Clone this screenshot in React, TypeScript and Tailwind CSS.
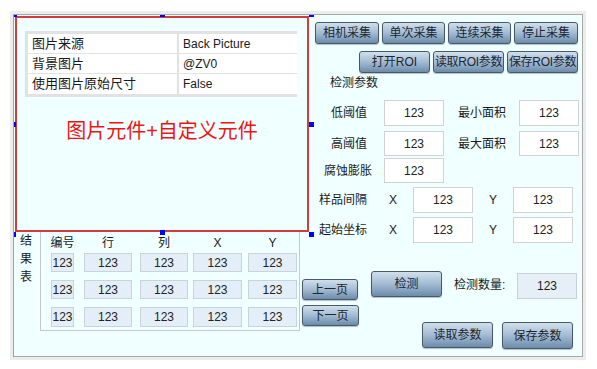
import React, {ReactNode} from "react"

// 按钮：蓝灰渐变
function Btn({children, className}: {children: ReactNode; className: string}) {
    return (
        <div
            className={`flex items-center justify-center whitespace-nowrap rounded-[3px] border border-[#4a5868] bg-linear-to-b from-[#d0dfec] via-[#a3bbd2] to-[#6c8cac] text-[12px] text-[#1c2630] shadow-[0_1px_1px_rgba(0,0,0,0.25)] ${className}`}
        >
            {children}
        </div>
    )
}

function Field({className = ""}: {className?: string}) {
    return (
        <div
            className={`flex items-center justify-center border border-[#d2d2d2] bg-white text-[12px] text-[#222] ${className}`}
        >
            123
        </div>
    )
}

function Cell({className}: {className: string}) {
    return (
        <div
            className={`flex items-center justify-center whitespace-nowrap border border-[#cad2da] bg-[#e4eef8] text-[12px] text-[#222] ${className}`}
        >
            123
        </div>
    )
}

const props = [
    ["图片来源", "Back Picture"],
    ["背景图片", "@ZV0"],
    ["使用图片原始尺寸", "False"],
]

const cols = [
    "w-[23px]",
    "ml-[10px] w-[48px]",
    "ml-[8px] w-[48px]",
    "ml-[5px] w-[49px]",
    "ml-[6px] w-[49px]",
]
const heads = ["编号", "行", "列", "X", "Y"]

export default function App() {
    return (
        <div className="h-[369px] w-[597px] bg-white pl-[13px] pt-[14px] font-['Liberation_Sans','Noto_Sans_CJK_SC',sans-serif] text-[#1a1a1a]">
            <div className="relative flex h-[343px] w-[570px] overflow-hidden border border-[#a8a8a8] border-l-[#b8a068] bg-[#f0ffff] shadow-[0_0_0_3px_#ececec]">
                {/* 左侧：图片元件 + 结果表 */}
                <div className="flex w-[296px] shrink-0 flex-col">
                    <div className="ml-[1px] mt-[1px] flex h-[216px] w-[294px] flex-col border-2 border-[#d23c3c]">
                        <div className="ml-[8px] mt-[13px] flex w-[272px] flex-col gap-[1px] bg-[#e2e2e2] py-[3px] pl-[3px]">
                            {props.map(([k, v], i) => (
                                <div key={k} className={`flex gap-[2px] ${i === 2 ? "h-[20px]" : "h-[19px]"}`}>
                                    <div className="flex w-[149px] items-center bg-white pl-[4px] text-[13px]">{k}</div>
                                    <div className="flex flex-1 items-center bg-white pl-[4px] text-[12px]">{v}</div>
                                </div>
                            ))}
                        </div>
                        <div className="mt-[22px] text-center text-[20px] leading-[24px] text-[#ee1515]">
                            图片元件+自定义元件
                        </div>
                    </div>

                    <div className="flex">
                        <div className="ml-[6px] flex w-[13px] flex-col text-[12px] leading-[18px]">
                            <span>结</span>
                            <span>果</span>
                            <span>表</span>
                        </div>
                        <div className="ml-[7px] flex h-[99px] w-[260px] shrink-0 flex-col border border-t-0 border-[#c8c8c8] pl-[10px]">
                            <div className="flex h-[21px] items-center text-[12px]">
                                {heads.map((h, i) => (
                                    <div key={h} className={`${cols[i]} flex justify-center whitespace-nowrap`}>{h}</div>
                                ))}
                            </div>
                            <div className="flex h-[19px]">
                                {cols.map((c, i) => <Cell key={i} className={c}/>)}
                            </div>
                            <div className="mt-[8px] flex h-[19px]">
                                {cols.map((c, i) => <Cell key={i} className={c}/>)}
                            </div>
                            <div className="mt-[8px] flex h-[20px]">
                                {cols.map((c, i) => <Cell key={i} className={c}/>)}
                            </div>
                        </div>
                    </div>
                </div>

                {/* 右侧：采集按钮 + 检测参数 */}
                <div className="flex w-[272px] shrink-0 flex-col">
                    <div className="mt-[7px] flex gap-[3px] pl-[5px]">
                        <Btn className="h-[22px] w-[64px]">相机采集</Btn>
                        <Btn className="h-[22px] w-[63px]">单次采集</Btn>
                        <Btn className="h-[22px] w-[63px]">连续采集</Btn>
                        <Btn className="h-[22px] w-[64px]">停止采集</Btn>
                    </div>
                    <div className="mt-[7px] flex gap-[3px] pl-[49px]">
                        <Btn className="h-[22px] w-[71px]">打开ROI</Btn>
                        <Btn className="h-[22px] w-[71px] text-[11px] tracking-[-0.3px]">读取ROI参数</Btn>
                        <Btn className="h-[22px] w-[71px] text-[11px] tracking-[-0.3px]">保存ROI参数</Btn>
                    </div>
                    <div className="mt-[2px] h-[16px] pl-[20px] text-[12px] leading-[16px]">检测参数</div>

                    <div className="mt-[9px] flex h-[26px] items-center text-[12px]">
                        <div className="w-[74px] pl-[21px]">低阈值</div>
                        <Field className="h-[26px] w-[60px]"/>
                        <div className="w-[75px] pl-[14px]">最小面积</div>
                        <Field className="h-[26px] w-[60px]"/>
                    </div>
                    <div className="mt-[5px] flex h-[25px] items-center text-[12px]">
                        <div className="w-[74px] pl-[21px]">高阈值</div>
                        <Field className="h-[25px] w-[60px]"/>
                        <div className="w-[75px] pl-[14px]">最大面积</div>
                        <Field className="h-[25px] w-[60px]"/>
                    </div>
                    <div className="mt-[2px] flex h-[25px] items-center text-[12px]">
                        <div className="w-[74px] pl-[14px]">腐蚀膨胀</div>
                        <Field className="h-[25px] w-[60px]"/>
                    </div>
                    <div className="mt-[4px] flex h-[26px] items-center text-[12px]">
                        <div className="w-[79px] pl-[9px]">样品间隔</div>
                        <div className="w-[24px]">X</div>
                        <Field className="h-[26px] w-[60px]"/>
                        <div className="w-[40px] pl-[16px]">Y</div>
                        <Field className="h-[26px] w-[60px]"/>
                    </div>
                    <div className="mt-[4px] flex h-[26px] items-center text-[12px]">
                        <div className="w-[79px] pl-[9px]">起始坐标</div>
                        <div className="w-[24px]">X</div>
                        <Field className="h-[26px] w-[60px]"/>
                        <div className="w-[40px] pl-[16px]">Y</div>
                        <Field className="h-[26px] w-[60px]"/>
                    </div>

                    <div className="-ml-[8px] flex">
                        <div className="mt-[36px] flex w-[57px] shrink-0 flex-col">
                            <Btn className="h-[21px] w-[56px]">上一页</Btn>
                            <Btn className="mt-[5px] h-[21px] w-[57px]">下一页</Btn>
                        </div>
                        <div className="flex flex-col">
                            <div className="mt-[28px] flex h-[28px] items-start">
                                <Btn className="ml-[12px] h-[26px] w-[71px]">检测</Btn>
                                <div className="ml-[12px] w-[63px] text-[12px] leading-[28px]">检测数量:</div>
                                <div className="mt-[2px] flex h-[26px] w-[60px] items-center justify-center border border-[#c8d0d8] bg-[#e6eef7] text-[12px]">
                                    123
                                </div>
                            </div>
                            <div className="mt-[23px] flex gap-[9px] pl-[63px]">
                                <Btn className="h-[26px] w-[71px]">读取参数</Btn>
                                <Btn className="h-[27px] w-[71px]">保存参数</Btn>
                            </div>
                        </div>
                    </div>
                </div>

                {/* 选中手柄 */}
                <div className="absolute left-0 top-0 h-[2px] w-[3px] bg-[#0000ff]"/>
                <div className="absolute left-[146px] top-0 h-[2px] w-[5px] bg-[#0000ff]"/>
                <div className="absolute left-[295px] top-0 h-[2px] w-[5px] bg-[#0000ff]"/>
                <div className="absolute left-0 top-[107px] h-[5px] w-[2px] bg-[#0000ff]"/>
                <div className="absolute left-[295px] top-[107px] h-[5px] w-[5px] bg-[#0000ff]"/>
                <div className="absolute left-0 top-[217px] h-[5px] w-[2px] bg-[#0000ff]"/>
                <div className="absolute left-[146px] top-[215px] h-[5px] w-[5px] bg-[#0000ff]"/>
                <div className="absolute left-[295px] top-[217px] h-[5px] w-[5px] bg-[#0000ff]"/>
            </div>
        </div>
    )
}
